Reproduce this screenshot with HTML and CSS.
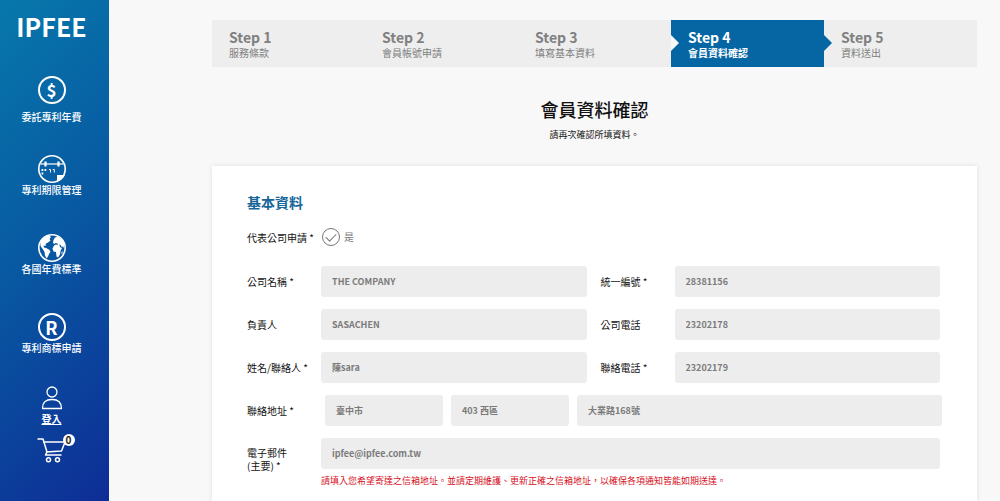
FILE: index.html
```html
<!DOCTYPE html>
<html lang="zh-Hant">
<head>
<meta charset="utf-8">
<meta name="viewport" content="width=device-width, initial-scale=1">
<title>IPFEE 會員資料確認</title>
<link rel="stylesheet" href="styles.css">
</head>
<body>
<div class="layout">
  <aside class="sidebar">
    <a class="logo" href="#">IPFEE</a>
    <nav>
      <ul class="menu">
        <li class="menu-item">
          <a class="menu-link menu-link-spaced" href="#">
            <span class="round-icon round-dollar" aria-hidden="true">$</span>
            <span>委託專利年費</span>
          </a>
        </li>
        <li class="menu-item">
          <a class="menu-link" href="#">
            <svg class="icon" viewBox="0 0 28 28" aria-hidden="true">
              <circle cx="14" cy="14" r="13.2" fill="none" stroke="#fff" stroke-width="1.6"/>
              <path d="M3 9h22" stroke="#fff" stroke-width="1.2"/>
              <path d="M7.5 6.500v5M20.500 6.500v5" stroke="#fff" stroke-width="2.200"/>
              <path d="M3.500 15h1.800M6.500 15h1.800M3.500 18.500h1.800" stroke="#fff" stroke-width="1.800"/>
              <path d="M11 14.500h1.500v3M14.800 14.500h1.500v3" fill="none" stroke="#fff" stroke-width="1"/>
              <path d="M19 27V20H27A14 14 0 0 1 19 27Z" fill="#fff"/>
            </svg>
            <span>專利期限管理</span>
          </a>
        </li>
        <li class="menu-item">
          <a class="menu-link" href="#">
            <svg class="icon" viewBox="0 0 28 28" aria-hidden="true">
              <circle cx="14" cy="14" r="13.2" fill="none" stroke="#fff" stroke-width="1.6"/>
              <path fill="#fff" d="M2.500 8C4 4 7 2 11 1.500l2 1.500-1.500 2 1 1.500-2.500 2-2 1-.5 2.500-2-.5.5 2 2 .5 3 1.500 1.500 2-1.500 2.500-1 2.500-1.500 2-1.500-3-.5-3.500L5 15.500 2.500 12Z"/>
              <path fill="#fff" d="M15.500 6l1.500-2.500 3-1 4 3 2.500 5-.5 4-1-2.500-1 1.500-1.500-2.500-1.500-.5 1.500 3 1.500.5-1.500 3-.5 3.500-2 3-1.500-1-.5-4.500-2.500-.5-1-3 1.500-3 2-1 2 .5-.5-1.500-2-.5-1 1-1.500-1Z"/>
              <path fill="#fff" d="M23.500 18l1-1v2l-1 1.500Z"/>
            </svg>
            <span>各國年費標準</span>
          </a>
        </li>
        <li class="menu-item">
          <a class="menu-link" href="#">
            <span class="round-icon" aria-hidden="true">R</span>
            <span>專利商標申請</span>
          </a>
        </li>
      </ul>
    </nav>
    <div class="account">
      <a class="login" href="#">
        <svg class="user-icon" viewBox="0 0 22 24" aria-hidden="true">
          <circle cx="11" cy="6" r="5" fill="none" stroke="#fff" stroke-width="1.300"/>
          <path d="M1.500 22.500C1.500 16 5 13.500 11 13.500S20.500 16 20.500 22.500Z" fill="none" stroke="#fff" stroke-width="1.300" stroke-linejoin="round"/>
        </svg>
        <span>登入</span>
      </a>
      <a class="cart" href="#" aria-label="購物車">
        <svg class="cart-icon" viewBox="0 0 30 26" aria-hidden="true">
          <g fill="none" stroke="#fff" stroke-width="1.500" stroke-linejoin="round" stroke-linecap="round">
            <path d="M1 2h5l4 13-1.500 3H24"/>
            <path d="M7 5h21l-3.500 9-15 1"/>
            <circle cx="11.500" cy="22.800" r="2"/>
            <circle cx="20.500" cy="22.800" r="2"/>
          </g>
        </svg>
        <span class="badge">0</span>
      </a>
    </div>
  </aside>

  <main class="main">
    <ol class="steps">
      <li class="step"><span class="step-name">Step 1</span><span>服務條款</span></li>
      <li class="step"><span class="step-name">Step 2</span><span>會員帳號申請</span></li>
      <li class="step"><span class="step-name">Step 3</span><span>填寫基本資料</span></li>
      <li class="step step-active" aria-current="step"><span class="step-name">Step 4</span><span>會員資料確認</span></li>
      <li class="step"><span class="step-name">Step 5</span><span>資料送出</span></li>
    </ol>

    <header class="intro">
      <h1 class="title">會員資料確認</h1>
      <p class="subtitle">請再次確認所填資料。</p>
    </header>

    <form class="card">
      <h2 class="section-title">基本資料</h2>
      <div class="row row-check">
        <span class="label" id="apply-label">代表公司申請 *</span>
        <label class="check-label"><input class="check" type="checkbox" checked aria-describedby="apply-label"><span>是</span></label>
      </div>
      <div class="row row-pair">
        <label class="label" for="company">公司名稱 *</label>
        <input class="field" id="company" type="text" value="THE COMPANY" readonly>
        <label class="label" for="tax-id">統一編號 *</label>
        <input class="field" id="tax-id" type="text" value="28381156" readonly>
      </div>
      <div class="row row-pair">
        <label class="label" for="owner">負責人</label>
        <input class="field" id="owner" type="text" value="SASACHEN" readonly>
        <label class="label" for="company-phone">公司電話</label>
        <input class="field" id="company-phone" type="text" value="23202178" readonly>
      </div>
      <div class="row row-pair">
        <label class="label" for="contact">姓名/聯絡人 *</label>
        <input class="field" id="contact" type="text" value="陳sara" readonly>
        <label class="label" for="contact-phone">聯絡電話 *</label>
        <input class="field" id="contact-phone" type="text" value="23202179" readonly>
      </div>
      <div class="row">
        <label class="label" for="city">聯絡地址 *</label>
        <div class="address">
          <input class="field" id="city" type="text" value="臺中市" readonly>
          <input class="field" type="text" value="403 西區" aria-label="區域" readonly>
          <input class="field" type="text" value="大業路168號" aria-label="街道" readonly>
        </div>
      </div>
      <div class="row row-email">
        <label class="label" for="email">電子郵件<br>(主要) *</label>
        <div>
          <input class="field" id="email" type="email" value="ipfee@ipfee.com.tw" readonly>
          <p class="note">請填入您希望寄達之信箱地址。並請定期維護、更新正確之信箱地址，以確保各項通知皆能如期送達。</p>
        </div>
      </div>
    </form>
  </main>
</div>
</body>
</html>
```

FILE: styles.css
```css
* {
  box-sizing: border-box;
}

body {
  margin: 0;
  background: #f8f8f8;
  color: #222;
  font-family: "Noto Sans CJK TC", "Noto Sans", sans-serif;
  font-size: 10px;
  line-height: 14px;
}

a {
  color: inherit;
  text-decoration: none;
}

h1, h2, p, ul, ol {
  margin: 0;
  padding: 0;
}

.layout {
  display: flex;
  min-height: 100vh;
}

/* Sidebar */
.sidebar {
  display: flex;
  flex: 0 0 109px;
  flex-direction: column;
  align-items: center;
  padding: 12px 6px 0 0;
  background: linear-gradient(135deg, #0778ab 0%, #085aa2 45%, #0e2d96 100%);
  color: #fff;
}

.logo {
  margin-bottom: 36px;
  font-size: 25px;
  font-weight: 700;
  line-height: 28px;
}

.menu {
  list-style: none;
}

.menu-item {
  min-height: 79px;
}

.menu-item:last-child {
  min-height: 0;
}

.menu-link,
.login {
  display: flex;
  flex-direction: column;
  align-items: center;
  font-weight: 500;
}

.menu-link-spaced {
  gap: 6px;
}

.icon,
.round-icon {
  width: 28px;
  height: 28px;
}

.round-icon {
  display: grid;
  place-items: center;
  border: 2px solid #fff;
  border-radius: 50%;
  font-size: 18px;
  font-weight: 700;
  line-height: 22px;
}

.round-dollar {
  font-size: 17px;
}

.account {
  display: flex;
  flex-direction: column;
  align-items: center;
  gap: 11px;
  margin-top: 31px;
}

.login {
  gap: 2px;
  font-weight: 700;
  text-decoration: underline;
}

.user-icon {
  width: 22px;
  height: 24px;
}

.cart {
  position: relative;
  display: block;
}

.cart-icon {
  display: block;
  width: 30px;
  height: 26px;
}

.badge {
  position: absolute;
  top: -3px;
  right: -8px;
  width: 12px;
  height: 12px;
  border-radius: 50%;
  background: #fff;
  color: #222;
  font-size: 10px;
  font-weight: 700;
  line-height: 12px;
  text-align: center;
}

/* Main column */
.main {
  display: flex;
  flex: 1;
  flex-direction: column;
  min-width: 0;
  padding: 20px 23px 0 103px;
}

.steps {
  display: grid;
  grid-template-columns: repeat(5, 1fr);
  background: #eee;
  color: #808080;
  list-style: none;
}

.step {
  position: relative;
  display: flex;
  flex-direction: column;
  padding: 9px 17px 7px;
}

.step-name {
  font-size: 14px;
  font-weight: 700;
  line-height: 17px;
}

.step-active {
  background: #0666a4;
  color: #fff;
  font-weight: 700;
}

.step-active::before,
.step-active::after {
  position: absolute;
  top: 15px;
  border: 8px solid transparent;
  border-right-width: 0;
  content: "";
}

.step-active::before {
  left: 0;
  border-left-color: #f8f8f8;
}

.step-active::after {
  left: 100%;
  border-left-color: #0666a4;
}

.intro {
  padding: 28px 0 24px;
  text-align: center;
}

.title {
  color: #111;
  font-size: 18px;
  font-weight: 500;
  line-height: 28px;
}

.subtitle {
  margin-top: 5px;
  color: #111;
  font-size: 9px;
}

/* Form card */
.card {
  display: flex;
  flex: 1;
  flex-direction: column;
  gap: 12px;
  padding: 26px 37px 12px 35px;
  background: #fff;
  box-shadow: 0 0 5px rgba(0, 0, 0, 0.1);
}

.section-title {
  color: #176699;
  font-size: 14px;
  font-weight: 700;
  line-height: 20px;
}

.row {
  display: grid;
  grid-template-columns: 74px 1fr;
  align-items: center;
}

.row-pair {
  grid-template-columns: 74px 1fr 14px 74px 1fr;
}

.row-pair .label:nth-of-type(2) {
  grid-column: 4;
}

.row-check {
  padding: 4px 0 8px;
}

.row-email {
  align-items: start;
}

.row-email .label {
  padding-top: 8px;
}

.label {
  color: #111;
  line-height: 13px;
}

.check-label {
  display: flex;
  align-items: center;
  gap: 4px;
  color: #777;
}

.check {
  display: grid;
  place-items: center;
  width: 18px;
  height: 18px;
  margin: 0 0 0 1px;
  border: 1px solid #777;
  border-radius: 50%;
  appearance: none;
}

.check:checked::before {
  width: 9px;
  height: 5px;
  margin-bottom: 3px;
  border: solid #777;
  border-width: 0 0 1px 1px;
  content: "";
  transform: rotate(-45deg);
}

.field {
  display: block;
  width: 100%;
  min-width: 0;
  height: 31px;
  padding: 0 11px;
  border: 0;
  border-radius: 3px;
  background: #ededed;
  color: #7b7b7b;
  font-family: inherit;
  font-size: 9px;
  font-weight: 700;
}

.address {
  display: grid;
  grid-template-columns: 118px 118px 1fr;
  gap: 8px;
  margin: 0 -2px 0 4px;
}

.note {
  margin-top: 5px;
  color: #d60f1c;
  font-size: 9px;
}
```
